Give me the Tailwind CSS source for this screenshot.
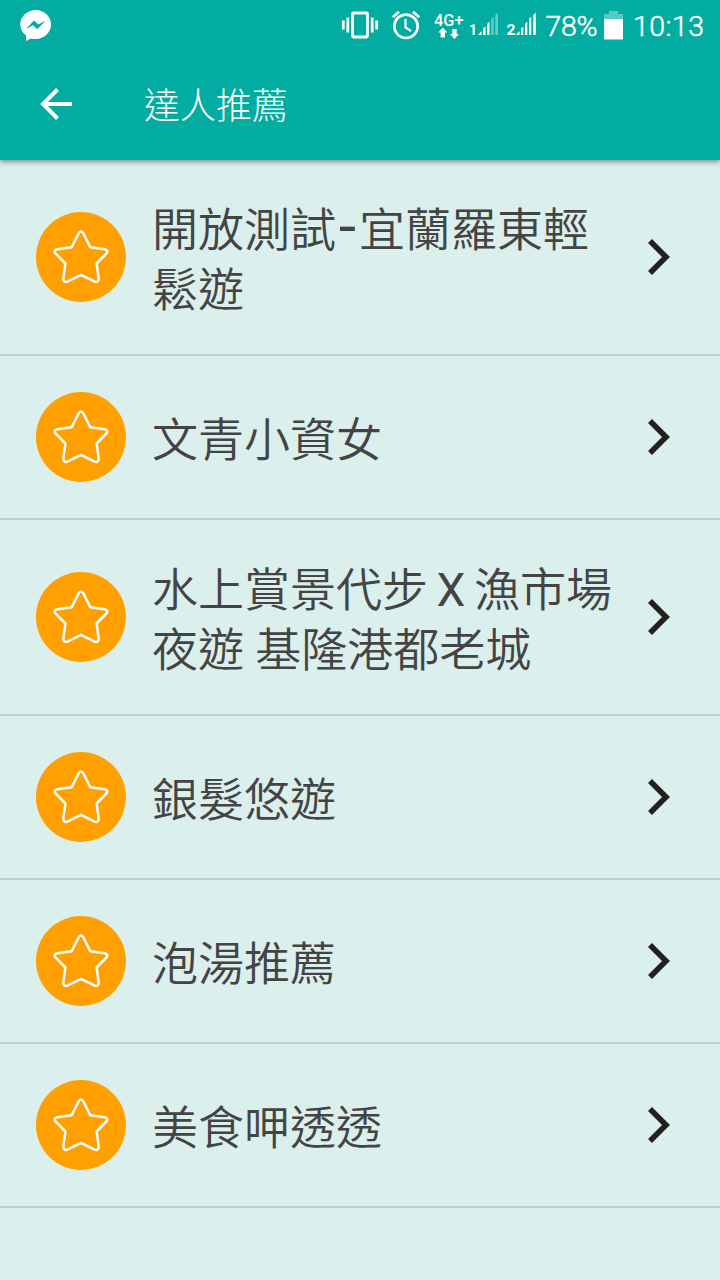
<!DOCTYPE html>
<html lang="zh-Hant">
<head>
    <meta charset="UTF-8">
    <meta name="viewport" content="width=device-width, initial-scale=1.0">
    <title>達人推薦</title>
    <script src="https://cdn.jsdelivr.net/npm/@tailwindcss/browser@4"></script>
</head>
<body class="bg-[#dbefec] w-[720px] min-h-screen overflow-x-hidden font-['Roboto','Noto_Sans_CJK_TC',sans-serif]">

    <!-- Shared icons -->
    <svg class="hidden">
        <symbol id="star" viewBox="0 0 90 90">
            <path d="M42.6 21.5Q45 17.5 47.4 21.5L54.3 35.3L68.6 37.3Q73 38.6 70.300 41.700L60.600 51.500L62.700 66.500Q62.600 70.900 58.600 69.600L45 62.800L31.400 69.600Q27.400 70.900 27.300 66.500L29.400 51.500L19.700 41.700Q17 38.600 21.400 37.300L35.700 35.300Z" fill="none" stroke="#fff" stroke-width="2.5" stroke-linejoin="round"/>
        </symbol>
        <symbol id="chevron" viewBox="0 0 24 36">
            <path d="M2 2L18 18L2 34" fill="none" stroke="#212121" stroke-width="5.6"/>
        </symbol>
    </svg>

    <header class="relative h-40 bg-[#02aca0] text-white shadow-[0_2px_5px_rgba(0,0,0,0.4)]">
        <!-- Status bar -->
        <div class="h-[50px]">
            <svg class="block" width="720" height="50" viewBox="0 0 720 50" fill="none" stroke="#fff">
                <!-- messenger -->
                <path d="M35.7 10C27 10 20.3 16.5 20.3 24.5C20.3 29 22.5 33 26 35.5V41L31 38.4C32.5 38.8 34 39 35.7 39C44.3 39 51 32.5 51 24.5S44.3 10 35.7 10Z" fill="#fff" stroke="none"/>
                <path d="M26 29L34 20.500L38.300 24.500L45.300 20.800L37.300 29.300L33 25.300Z" fill="#02aca0" stroke="none"/>
                <!-- vibrate -->
                <rect x="352.500" y="13" width="15" height="24" rx="1" stroke-width="2.800"/>
                <path d="M347.800 17.500V32.500M343.300 20.500V29.500M372.200 17.500V32.500M376.700 20.500V29.500" stroke-width="2.800"/>
                <!-- alarm -->
                <circle cx="406" cy="26.300" r="11.700" stroke-width="2.600"/>
                <path d="M392.800 17.200L399 11.800M419.200 17.200L413 11.800" stroke-width="2.800"/>
                <path d="M405.500 19V27.500L411 31" stroke-width="2.200"/>
                <!-- network -->
                <text x="434" y="25.500" textLength="29.500" lengthAdjust="spacingAndGlyphs" font-size="17" font-weight="500" fill="#fff" stroke="none">4G+</text>
                <path d="M442.800 27.500L447.300 32.500H445V37.500H440.600V32.500H438.300ZM454.500 39L450 34H452.300V29H456.700V34H459Z" fill="#fff" stroke="none"/>
                <text x="469" y="34.500" font-size="14" font-weight="700" fill="#fff" stroke="none">1</text>
                <path d="M478 35L481.500 31V35ZM483 35V28.500L485.500 26.500V35ZM487 35V24L489.500 21.500V35Z" fill="#fff" stroke="none"/>
                <path d="M491.200 35V19L493.700 16.500V35ZM495.300 35V15L497.900 12.500V35Z" fill="#fff" fill-opacity=".4" stroke="none"/>
                <text x="506.500" y="34.500" textLength="9" lengthAdjust="spacingAndGlyphs" font-size="14" font-weight="700" fill="#fff" stroke="none">2</text>
                <path d="M516 35L519.500 31V35ZM521 35V28.500L523.300 26.500V35ZM525 35V24L527.300 21.500V35ZM529 35V19L531.300 16.500V35ZM533.300 35V15L535.800 12.500V35Z" fill="#fff" stroke="none"/>
                <text x="545.500" y="36" textLength="52" font-size="28.500" font-weight="300" fill="#fff" stroke="#fff" stroke-width=".5">78%</text>
                <!-- battery -->
                <path d="M604 19V14H609V11H618V14H623V19Z" fill="#fff" fill-opacity=".35" stroke="none"/>
                <rect x="604" y="19" width="19" height="20.500" fill="#fff" stroke="none"/>
                <text x="633" y="36" textLength="71" font-size="28.500" font-weight="300" fill="#fff" stroke="#fff" stroke-width=".5">10:13</text>
            </svg>
        </div>
        <!-- Toolbar -->
        <div class="flex items-center h-[108px] pl-10">
            <svg class="w-8 h-8" viewBox="0 0 32 32" fill="none" stroke="#fff" stroke-width="4">
                <path d="M32 16H4M17.500 1.500L3 16L17.500 30.500"/>
            </svg>
            <h1 class="ml-[72px] pt-[6px] text-[36px] leading-none font-light">達人推薦</h1>
        </div>
    </header>

    <ul class="text-[#444] text-[46px] leading-[60px] font-[350]">
        <li class="flex items-center h-[196px] border-b-2 border-[#bcd1ce] pl-9 pr-12">
            <svg class="w-[90px] h-[90px] shrink-0 rounded-full bg-[#ffa000]"><use href="#star"/></svg>
            <p class="ml-[26px] w-[470px] pt-1.5">開放測試<span class="inline-block w-[23px] text-center font-medium scale-x-125 -translate-y-[3px]">-</span>宜蘭羅東輕<br>鬆遊</p>
            <svg class="ml-auto w-6 h-9 shrink-0"><use href="#chevron"/></svg>
        </li>
        <li class="flex items-center h-[164px] border-b-2 border-[#bcd1ce] pl-9 pr-12">
            <svg class="w-[90px] h-[90px] shrink-0 rounded-full bg-[#ffa000]"><use href="#star"/></svg>
            <p class="ml-[26px] w-[470px] pt-1.5">文青小資女</p>
            <svg class="ml-auto w-6 h-9 shrink-0"><use href="#chevron"/></svg>
        </li>
        <li class="flex items-center h-[196px] border-b-2 border-[#bcd1ce] pl-9 pr-12">
            <svg class="w-[90px] h-[90px] shrink-0 rounded-full bg-[#ffa000]"><use href="#star"/></svg>
            <p class="ml-[26px] w-[470px] pt-1.5">水上賞景代步<span class="inline-block w-[46px] text-center font-normal"> X </span>漁市場<br>夜遊 基隆港都老城</p>
            <svg class="ml-auto w-6 h-9 shrink-0"><use href="#chevron"/></svg>
        </li>
        <li class="flex items-center h-[164px] border-b-2 border-[#bcd1ce] pl-9 pr-12">
            <svg class="w-[90px] h-[90px] shrink-0 rounded-full bg-[#ffa000]"><use href="#star"/></svg>
            <p class="ml-[26px] w-[470px] pt-1.5">銀髮悠遊</p>
            <svg class="ml-auto w-6 h-9 shrink-0"><use href="#chevron"/></svg>
        </li>
        <li class="flex items-center h-[164px] border-b-2 border-[#bcd1ce] pl-9 pr-12">
            <svg class="w-[90px] h-[90px] shrink-0 rounded-full bg-[#ffa000]"><use href="#star"/></svg>
            <p class="ml-[26px] w-[470px] pt-1.5">泡湯推薦</p>
            <svg class="ml-auto w-6 h-9 shrink-0"><use href="#chevron"/></svg>
        </li>
        <li class="flex items-center h-[164px] border-b-2 border-[#bcd1ce] pl-9 pr-12">
            <svg class="w-[90px] h-[90px] shrink-0 rounded-full bg-[#ffa000]"><use href="#star"/></svg>
            <p class="ml-[26px] w-[470px] pt-1.5">美食呷透透</p>
            <svg class="ml-auto w-6 h-9 shrink-0"><use href="#chevron"/></svg>
        </li>
    </ul>

</body>
</html>
